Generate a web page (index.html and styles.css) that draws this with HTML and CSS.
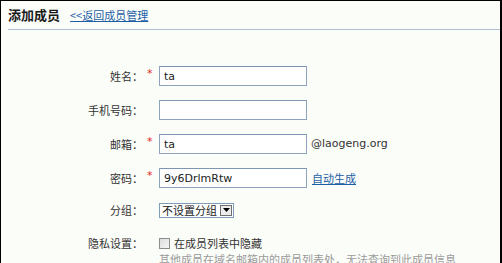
FILE: index.html
```html
<!DOCTYPE html>
<html lang="zh-CN">
<head>
<meta charset="utf-8">
<title>添加成员</title>
<link rel="stylesheet" href="styles.css">
</head>
<body>
<div class="page">
  <div class="head">
    <h1 class="title">添加成员</h1>
    <a class="back" href="#">&lt;&lt;返回成员管理</a>
  </div>
  <form class="form">
    <div class="row">
      <label class="lbl">姓名：</label><span class="req">*</span>
      <div class="field"><input class="txt spell" type="text" value="ta"></div>
    </div>
    <div class="row">
      <label class="lbl">手机号码：</label><span class="req"></span>
      <div class="field"><input class="txt" type="text" value=""></div>
    </div>
    <div class="row">
      <label class="lbl">邮箱：</label><span class="req">*</span>
      <div class="field"><input class="txt spell" type="text" value="ta"><span class="domain">@laogeng.org</span></div>
    </div>
    <div class="row">
      <label class="lbl">密码：</label><span class="req">*</span>
      <div class="field"><input class="txt spell" type="text" value="9y6DrlmRtw"><a class="gen" href="#">自动生成</a></div>
    </div>
    <div class="row row-sel">
      <label class="lbl">分组：</label><span class="req"></span>
      <div class="field">
        <div class="select"><span class="sel-text">不设置分组</span><span class="sel-btn"><svg width="7" height="4" viewBox="0 0 7 4"><path d="M0 0H7L3.5 4Z" fill="#000"/></svg></span></div>
      </div>
    </div>
    <div class="row row-priv">
      <label class="lbl">隐私设置：</label><span class="req"></span>
      <div class="field field-col">
        <div class="check-line"><span class="cbox"></span><span class="ctext">在成员列表中隐藏</span></div>
        <div class="hint">其他成员在域名邮箱内的成员列表处，无法查询到此成员信息</div>
      </div>
    </div>
  </form>
</div>
</body>
</html>
```
FILE: styles.css
```css
html, body {
  margin: 0;
  padding: 0;
  background: #fbfdf9;
}
.page {
  height: 263px;
  box-sizing: border-box;
  border-top: 1px solid #000;
  border-left: 1px solid #000;
  border-right: 2px solid #000;
  background: #fbfdf9;
  overflow: hidden;
  font-family: "Noto Sans CJK SC", sans-serif;
  font-size: 11px;
  line-height: 14px;
  color: #333;
}
.head {
  display: flex;
  align-items: center;
  gap: 10px;
  height: 28px;
  margin-left: 7px;
  border-bottom: 1px solid #b2bece;
}
.title {
  margin: 0;
  font-size: 13px;
  line-height: 16px;
  font-weight: bold;
  color: #1a1a1a;
}
.back {
  color: #1d5ea6;
  text-decoration: underline;
  font-size: 11px;
}
.form {
  padding-top: 29px;
}
.row {
  display: flex;
  align-items: center;
  height: 34px;
}
.row-sel {
  height: 30px;
}
.row-priv {
  height: auto;
  align-items: flex-start;
  margin-top: 10px;
}
.lbl {
  width: 142px;
  text-align: right;
  color: #333;
  flex: none;
}
.row-priv .lbl {
  line-height: 16px;
}
.req {
  width: 16px;
  flex: none;
  padding-left: 4px;
  box-sizing: border-box;
  color: #e02a2a;
  font-family: "DejaVu Sans", sans-serif;
  font-size: 11px;
  align-self: center;
  margin-top: -4px;
}
.row-priv .req {
  align-self: flex-start;
}
.field {
  display: flex;
  align-items: center;
  gap: 4px;
}
.field-col {
  flex-direction: column;
  align-items: flex-start;
  gap: 0;
}
.txt {
  width: 148px;
  height: 20px;
  box-sizing: border-box;
  margin: 0;
  padding: 0 4px;
  border: 1px solid #8ea3bd;
  border-top-color: #7f96b3;
  background: #fff;
  font-family: "DejaVu Sans", sans-serif;
  font-size: 11px;
  color: #222;
  outline: none;
}
.spell {
  text-decoration: underline wavy #e04848;
  text-decoration-thickness: 1px;
  text-underline-offset: 2px;
}
.domain {
  font-family: "DejaVu Sans", sans-serif;
  font-size: 11px;
  color: #333;
}
.gen {
  margin-left: 1px;
  color: #1d5ea6;
  text-decoration: underline;
}
.select {
  display: flex;
  align-items: center;
  width: 75px;
  height: 15px;
  box-sizing: border-box;
  border: 1px solid #7f9db9;
  background: #fff;
}
.sel-text {
  flex: 1;
  padding-left: 2px;
  color: #222;
  line-height: 13px;
}
.sel-btn {
  width: 12px;
  height: 11px;
  margin-right: 1px;
  box-sizing: border-box;
  border: 1px solid #6f6f6f;
  background: #ececec;
  display: flex;
  align-items: center;
  justify-content: center;
}
.check-line {
  display: flex;
  align-items: center;
  gap: 4px;
  height: 16px;
}
.cbox {
  width: 11px;
  height: 11px;
  box-sizing: border-box;
  border: 1px solid #8c8c8c;
  background: linear-gradient(135deg, #dcdcdc, #f6f6f6);
}
.ctext {
  color: #333;
}
.hint {
  color: #9a9a9a;
  line-height: 16px;
  white-space: nowrap;
}
```
